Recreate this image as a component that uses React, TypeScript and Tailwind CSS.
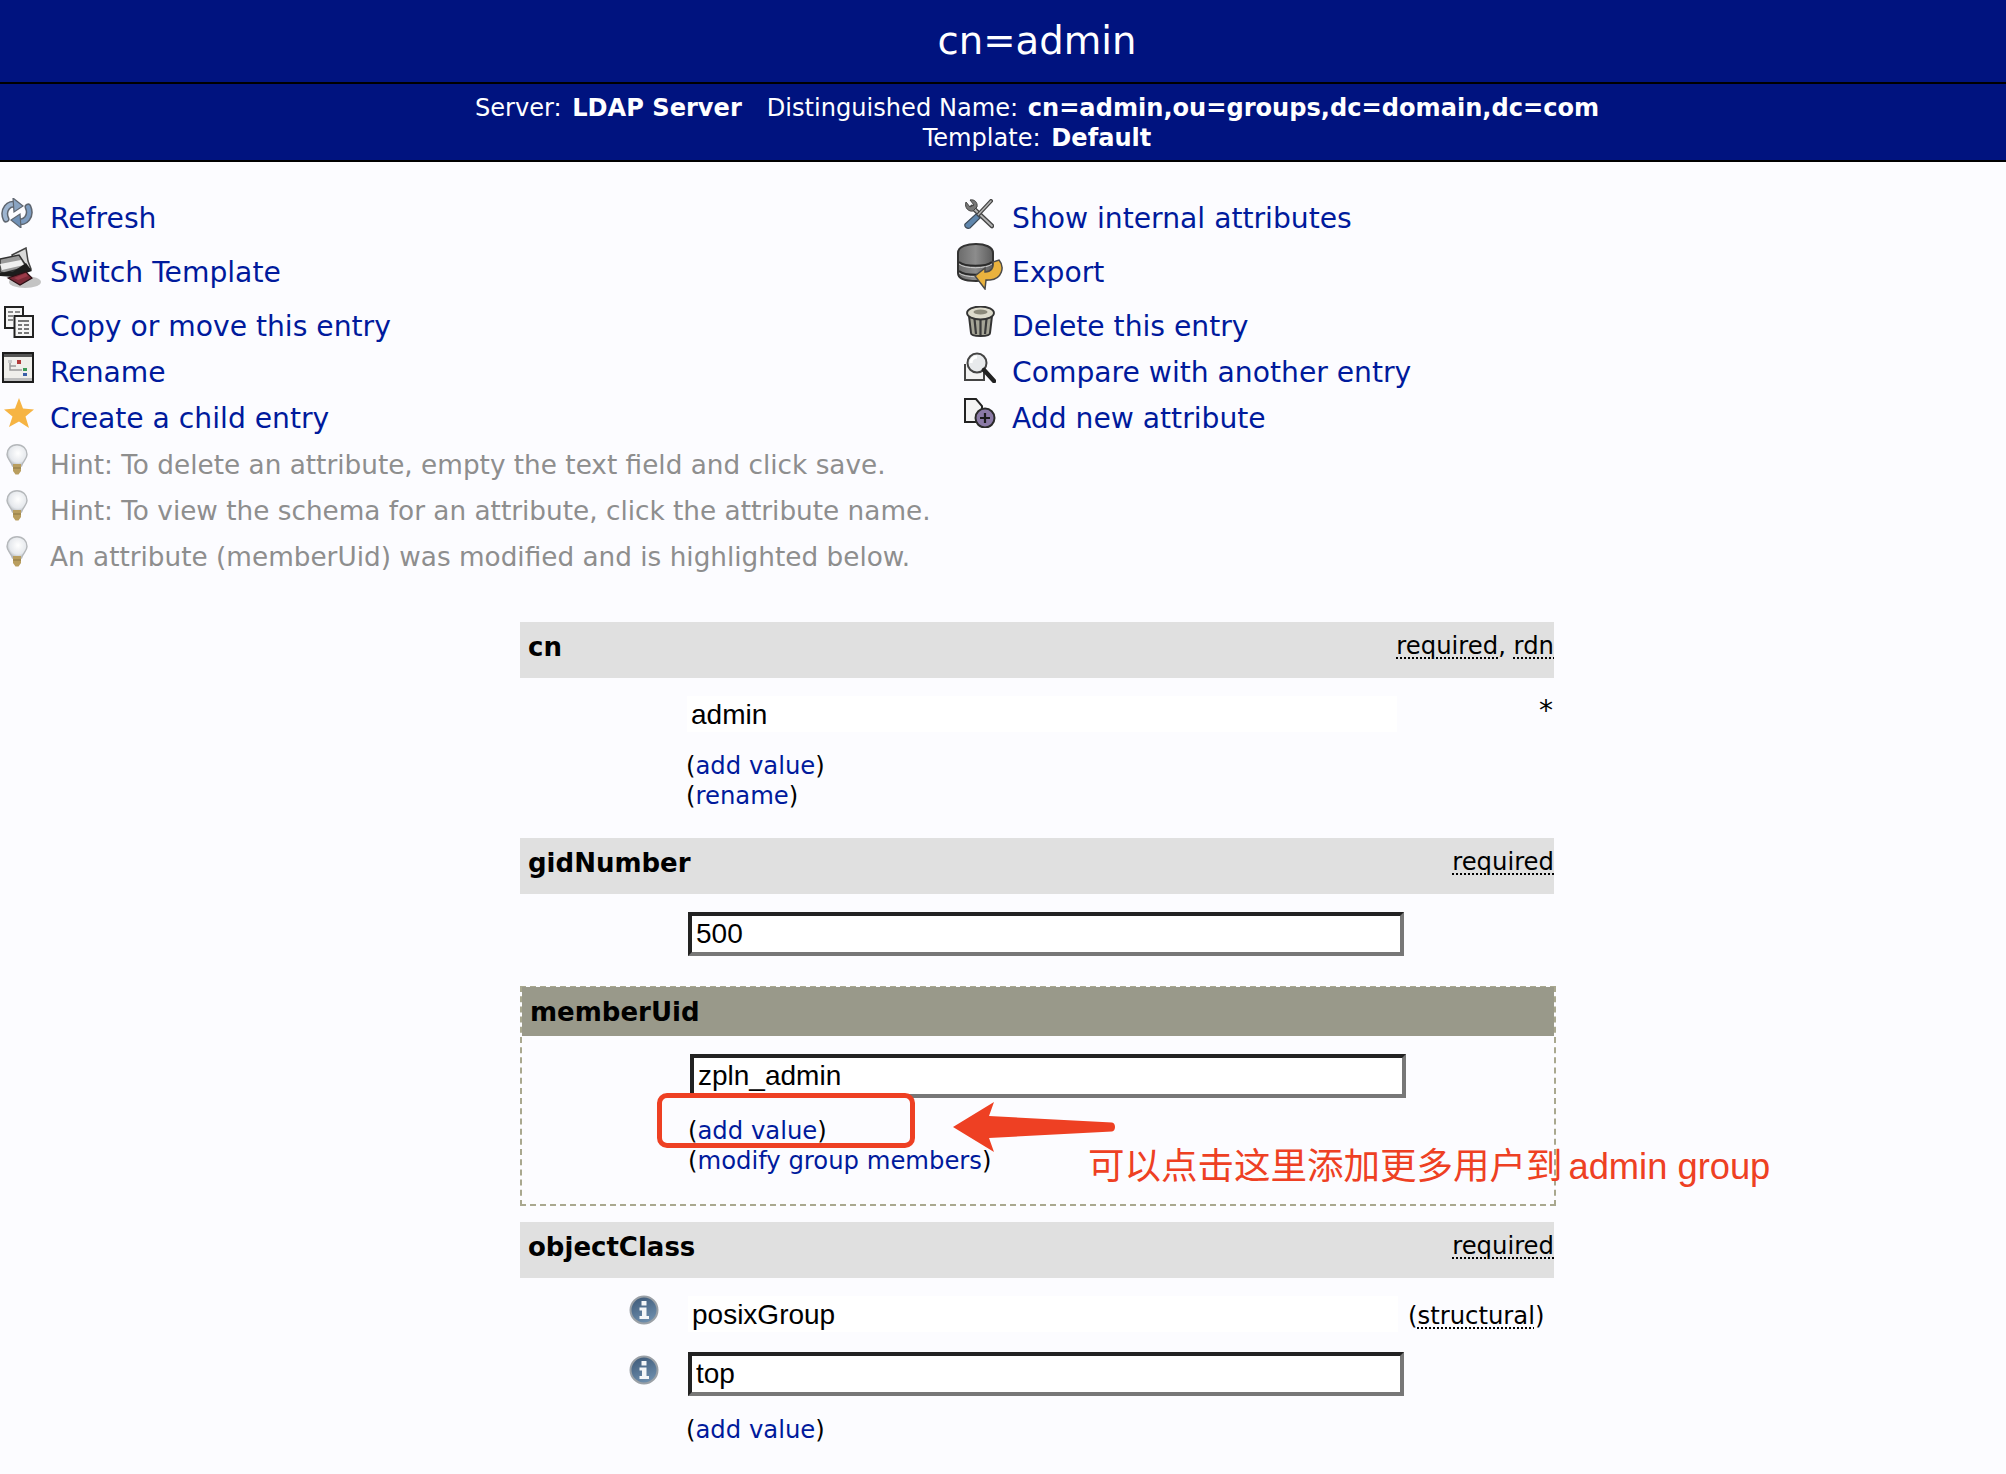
import React from "react";

const Refresh = () => (
  <svg width="32" height="30" viewBox="0 0 32 30" className="blur-[0.4px]">
    <g fill="none" strokeLinecap="round">
      <path d="M5 21C1 12 8 4 15 7" stroke="#5f6670" strokeWidth="7" />
      <path d="M27 9C31 18 24 26 17 23" stroke="#5f6670" strokeWidth="7" />
      <path d="M5 21C1 12 8 4 15 7" stroke="#9db4cf" strokeWidth="4" />
      <path d="M27 9C31 18 24 26 17 23" stroke="#7d9cc0" strokeWidth="4" />
    </g>
    <path d="M12 0L22 8L13 14Z" fill="#8aa4c2" stroke="#5f6670" strokeWidth="1.2" />
    <path d="M20 30L10 22L19 16Z" fill="#6f90b6" stroke="#5f6670" strokeWidth="1.2" />
  </svg>
);

const SwitchT = () => (
  <svg width="42" height="42" viewBox="0 0 42 42" className="blur-[0.6px]">
    <ellipse cx="25" cy="35" rx="16" ry="6" fill="#c4c4c4" />
    <path d="M12 8L26 1L28 14L31 22L16 22Z" fill="#d9d9d9" stroke="#444" strokeWidth="1.5" />
    <path d="M0 12L19 8L27 20L4 26L0 25Z" fill="#9a9a9a" stroke="#333" strokeWidth="1.5" />
    <path d="M0 17L21 13L24 18L2 23Z" fill="#efefef" />
    <path d="M0 26L14 24L26 16L32 24L14 30L0 29Z" fill="#1c1c1c" />
    <path d="M8 31L26 25L32 31L20 38Z" fill="#7a2a37" stroke="#2c1015" strokeWidth="1.2" />
    <path d="M14 31L26 26L28 29L18 33Z" fill="#9c3a49" />
  </svg>
);

const Copy = () => (
  <svg width="30" height="32" viewBox="0 0 30 32" className="blur-[0.3px]">
    <rect x="1" y="1" width="18" height="21" fill="#f5f5f5" stroke="#222" strokeWidth="2" />
    <path d="M4 6h5M11 6h5M4 10h5M11 10h5M4 14h5" stroke="#8a8a8a" strokeWidth="2" />
    <rect x="10.5" y="10" width="18.5" height="21" fill="#f5f5f5" stroke="#222" strokeWidth="2" />
    <path d="M14 15h11M14 19h4M20 19h5M14 23h4M20 23h5M14 27h4M20 27h5" stroke="#777" strokeWidth="2" />
  </svg>
);

const RenameI = () => (
  <svg width="32" height="31" viewBox="0 0 32 31" className="blur-[0.3px]">
    <rect x="1" y="1" width="30" height="29" fill="#f0efeb" stroke="#1c1c1c" strokeWidth="2" />
    <rect x="2" y="2" width="28" height="3" fill="#555" />
    <rect x="2" y="26" width="28" height="3" fill="#bdbdbd" />
    <path d="M8 10V18H20M8 14H14" stroke="#9a9a9a" strokeWidth="1.5" fill="none" />
    <rect x="6" y="8" width="4" height="3" fill="#c9c9c9" />
    <rect x="15" y="8" width="4" height="4" fill="#b23a3a" />
    <rect x="21" y="16" width="4" height="3" fill="#3d9a56" />
    <rect x="21" y="21" width="4" height="3" fill="#3a5fa8" />
  </svg>
);

const Star = () => (
  <svg width="30" height="30" viewBox="0 0 30 30" className="blur-[0.4px]">
    <path d="M15 0L19 10.5L30 11.5L21.5 18.5L25 30L15 23.5L5 29L8.5 18.5L0 11.5L11 10.5Z" fill="#f6b443" />
  </svg>
);

const Bulb = () => (
  <svg width="22" height="31" viewBox="0 0 22 31" className="blur-[0.3px]">
    <defs>
      <radialGradient id="bulbg" cx="0.55" cy="0.4" r="0.6">
        <stop offset="0" stopColor="#ffffff" />
        <stop offset="0.7" stopColor="#e6e9ed" />
        <stop offset="1" stopColor="#b4b9be" />
      </radialGradient>
    </defs>
    <path d="M11 0.8C5 0.8 1 5 1 10.5C1 15 5 17 6.5 22H15.5C17 17 21 15 21 10.5C21 5 17 .8 11 .8Z" fill="url(#bulbg)" stroke="#b5b8bb" strokeWidth="1.4" />
    <path d="M7 20H15V27L12.5 30.5H9.5L7 27Z" fill="#b99e5f" />
    <path d="M7 24H15" stroke="#8b7745" strokeWidth="1" />
  </svg>
);

const Tools = () => (
  <svg width="30" height="30" viewBox="0 0 30 30" className="blur-[0.4px]">
    <path d="M8 8L28 27" stroke="#444" strokeWidth="4.5" strokeLinecap="round" />
    <path d="M8 8L28 27" stroke="#b4b4b4" strokeWidth="1.8" strokeLinecap="round" />
    <path d="M2 3L6 8L10 6L6 1C10 0 14 3 13 8L9 12C5 13 0 9 2 3Z" fill="#777" stroke="#444" strokeWidth="1" />
    <path d="M27 2L13 17" stroke="#444" strokeWidth="4" strokeLinecap="round" />
    <path d="M27 2L13 17" stroke="#b4b4b4" strokeWidth="1.5" strokeLinecap="round" />
    <path d="M12 15L16 19L6 29C3 30 0 28 1 25Z" fill="#5f86ad" stroke="#3d4957" strokeWidth="1.2" />
  </svg>
);

const Db = () => (
  <svg width="47" height="47" viewBox="0 0 47 47" className="blur-[0.5px]">
    <defs>
      <linearGradient id="dbg" x1="0" x2="1" y1="0" y2="0">
        <stop offset="0" stopColor="#6b6b6b" />
        <stop offset="0.5" stopColor="#8c8c8c" />
        <stop offset="1" stopColor="#5c5c5c" />
      </linearGradient>
    </defs>
    <path d="M1 10C1 3 11 1 19 1C28 1 36 4 36 10V30C36 36 28 38 19 38C10 38 1 36 1 30Z" fill="url(#dbg)" stroke="#333" strokeWidth="2" />
    <path d="M2 19C8 24 29 24 35 19M2 28C8 33 29 33 35 28" fill="none" stroke="#2a2a2a" strokeWidth="2" />
    <path d="M2 21C8 26 29 26 35 21M2 30C8 35 29 35 35 30" fill="none" stroke="#ccc" strokeWidth="1" />
    <path d="M18 33L28 25V29C34 29 37 25 36 19L42 17C48 24 45 36 33 37H29L28 46Z" fill="#e9b23e" stroke="#4a4a4a" strokeWidth="1.5" />
  </svg>
);

const Trash = () => (
  <svg width="29" height="31" viewBox="0 0 29 31" className="blur-[0.4px]">
    <path d="M3 10L5 27C5 31 24 31 24 27L26 10Z" fill="#a5a496" stroke="#333" strokeWidth="2" />
    <path d="M8.5 13L10 28M14.5 13V29M20.5 13L19 28" stroke="#3a3a3a" strokeWidth="2.2" />
    <ellipse cx="14.5" cy="7" rx="13.5" ry="6.5" fill="#dcdacb" stroke="#333" strokeWidth="1.8" />
    <ellipse cx="14.5" cy="6" rx="7" ry="2.5" fill="#8b897a" />
  </svg>
);

const Compare = () => (
  <svg width="32" height="31" viewBox="0 0 32 31" className="blur-[0.4px]">
    <path d="M1 12V28H20V14L12 3H8" fill="#f2f2f2" stroke="#444" strokeWidth="2" />
    <circle cx="13" cy="11" r="9.5" fill="#e8eaec" stroke="#444" strokeWidth="2" />
    <path d="M7 11C7 7 10 5 13 5" stroke="#fff" strokeWidth="3" fill="none" />
    <path d="M20 18L30 29" stroke="#222" strokeWidth="4.5" strokeLinecap="round" />
  </svg>
);

const AddAttr = () => (
  <svg width="32" height="30" viewBox="0 0 32 30" className="blur-[0.3px]">
    <path d="M1 1H12L18 8V24H1Z" fill="#f3f3f3" stroke="#222" strokeWidth="2" />
    <circle cx="21" cy="20" r="9.5" fill="#8b7aa6" stroke="#2a2a2a" strokeWidth="2" />
    <path d="M21 15V25M16 20H26" stroke="#1c1c1c" strokeWidth="2.2" />
  </svg>
);

const Info = () => (
  <svg width="30" height="30" viewBox="0 0 30 30" className="blur-[0.3px]">
    <defs>
      <linearGradient id="infog" x1="0" x2="0.4" y1="0" y2="1">
        <stop offset="0" stopColor="#3a5675" />
        <stop offset="1" stopColor="#6c8cab" />
      </linearGradient>
    </defs>
    <circle cx="15" cy="15" r="13.5" fill="url(#infog)" stroke="#9aa0a6" strokeWidth="2" />
    <rect x="12.5" y="6" width="5" height="4.5" fill="#f4f6f8" />
    <path d="M10.5 12.5H17.5V21H20V24H10.5V21H13V15.5H10.5Z" fill="#f4f6f8" />
  </svg>
);

const Row = ({ h, icon, text, gray }: { h: string; icon: React.ReactNode; text: string; gray?: boolean }) => (
  <div className={`flex items-start ${h}`}>
    <div className="w-[50px] shrink-0">{icon}</div>
    <a className={`mt-[2px] leading-[46px] whitespace-nowrap ${gray ? "text-[#8e8e8e] text-[26.3px]" : "text-[#001a9c] text-[28.2px]"}`}>{text}</a>
  </div>
);

const Link = ({ text }: { text: string }) => (
  <div className="h-[30px] leading-[30px] text-[24.3px] text-black whitespace-nowrap">
    (<a className="text-[#001a9c]">{text}</a>)
  </div>
);

const Req = ({ text }: { text: string }) => (
  <span className="underline decoration-dotted decoration-2 underline-offset-[3px]">{text}</span>
);

const Header = ({ name, right }: { name: string; right?: React.ReactNode }) => (
  <div className="h-[56px] flex items-center justify-between pl-2 bg-[#e0e0e0] text-black">
    <span className="text-[26px] font-bold leading-none mb-[6px]">{name}</span>
    <span className="text-[24.3px] leading-none mb-[7px]">{right}</span>
  </div>
);

const Field = ({ value }: { value: string }) => (
  <input
    readOnly
    value={value}
    className="block w-[716px] h-[44px] bg-white pl-1 text-black text-[28px] border-4 border-t-[#222222] border-l-[#222222] border-b-[#777777] border-r-[#777777] outline-none [font-family:'Liberation_Sans',sans-serif]"
  />
);

const Static = ({ value }: { value: string }) => (
  <div className="w-[710px] h-[36px] bg-white pl-1 leading-[37px] text-black text-[28px] [font-family:'Liberation_Sans',sans-serif]">
    {value}
  </div>
);

export default function App() {
  return (
    <div className="w-[2006px] h-[1474px] overflow-hidden bg-[#fcfcff] [font-family:'DejaVu_Sans',Verdana,sans-serif]">
      <div className="w-[2074px]">
        <div className="h-[84px] bg-[#00137f] border-b-2 border-black flex items-center justify-center text-white text-[38.6px] pb-[1px]">
          cn=admin
        </div>
        <div className="h-[78px] bg-[#00137f] border-b-2 border-black pt-[9px] text-center text-white text-[24.1px] leading-[30px]">
          <div>
            Server: <b className="ml-[3px]">LDAP Server</b>
            <span className="inline-block w-[25px]" />
            Distinguished Name: <b className="ml-[2px]">cn=admin,ou=groups,dc=domain,dc=com</b>
          </div>
          <div>
            Template: <b className="ml-[3px]">Default</b>
          </div>
        </div>

        <div className="flex pt-[32px]">
          <div className="w-[962px] shrink-0">
            <Row h="h-[54px]" icon={<div className="mt-[4px] ml-[1px]"><Refresh /></div>} text="Refresh" />
            <Row h="h-[54px]" icon={<div className="-mt-[1px]"><SwitchT /></div>} text="Switch Template" />
            <Row h="h-[46px]" icon={<div className="mt-[4px] ml-[4px]"><Copy /></div>} text="Copy or move this entry" />
            <Row h="h-[46px]" icon={<div className="mt-[4px] ml-[2px]"><RenameI /></div>} text="Rename" />
            <Row h="h-[46px]" icon={<div className="mt-[4px] ml-[4px]"><Star /></div>} text="Create a child entry" />
            <Row h="h-[46px]" gray icon={<div className="mt-[4px] ml-[6px]"><Bulb /></div>} text="Hint: To delete an attribute, empty the text field and click save." />
            <Row h="h-[46px]" gray icon={<div className="mt-[4px] ml-[6px]"><Bulb /></div>} text="Hint: To view the schema for an attribute, click the attribute name." />
            <Row h="h-[46px]" gray icon={<div className="mt-[4px] ml-[6px]"><Bulb /></div>} text="An attribute (memberUid) was modified and is highlighted below." />
          </div>
          <div className="flex-1">
            <Row h="h-[54px]" icon={<div className="mt-[5px] ml-[2px]"><Tools /></div>} text="Show internal attributes" />
            <Row h="h-[54px]" icon={<div className="-mt-[5px] -ml-[5px]"><Db /></div>} text="Export" />
            <Row h="h-[46px]" icon={<div className="mt-[4px] ml-[4px]"><Trash /></div>} text="Delete this entry" />
            <Row h="h-[46px]" icon={<div className="mt-[4px] ml-[2px]"><Compare /></div>} text="Compare with another entry" />
            <Row h="h-[46px]" icon={<div className="mt-[4px] ml-[2px]"><AddAttr /></div>} text="Add new attribute" />
          </div>
        </div>

        <div className="w-[1034px] mx-auto mt-[44px]">
          <Header name="cn" right={<><Req text="required" />, <Req text="rdn" /></>} />
          <div className="h-[160px] pt-[18px] pl-[166px]">
            <div className="flex">
              <div className="ml-[1px]"><Static value="admin" /></div>
              <div className="flex-1 text-right text-[28px] leading-[28px] text-black pr-[1px] mt-[1px]">*</div>
            </div>
            <div className="mt-[19px]">
              <Link text="add value" />
              <Link text="rename" />
            </div>
          </div>

          <Header name="gidNumber" right={<Req text="required" />} />
          <div className="h-[92px] pt-[18px] pl-[168px]">
            <Field value="500" />
          </div>

          <div className="relative w-[1036px] h-[220px] border-2 border-dashed border-[#a9a88f]">
            <div className="h-[49px] mt-[-1px] flex items-center pl-[8px] pt-[2px] bg-[#99998a] text-black text-[26px] font-bold">
              memberUid
            </div>
            <div className="pt-[18px] pl-[168px]">
              <Field value="zpln_admin" />
              <div className="mt-[18px] -ml-[2px]">
                <Link text="add value" />
                <Link text="modify group members" />
              </div>
            </div>

            <div className="absolute left-[135px] top-[105px] w-[258px] h-[55px] border-[5px] border-[#ee4023] rounded-[10px]" />
            <svg className="absolute left-[430px] top-[113px]" width="164" height="52" viewBox="0 0 164 52">
              <path d="M1 26L42 1L37 15L160 21.5C164 22 164 30 160 30.5L37 37L42 51Z" fill="#ee4023" />
            </svg>
            <div className="absolute left-[566px] top-[157px] whitespace-nowrap text-[36.3px] leading-[44px] text-[#ee4023] [font-family:'Liberation_Sans','Noto_Sans_CJK_SC',sans-serif]">
              <span className="text-[36.5px]">可以点击这里添加更多用户到</span>
              <span className="ml-[6px]">admin group</span>
            </div>
          </div>

          <div className="mt-[16px]">
            <Header name="objectClass" right={<Req text="required" />} />
          </div>
          <div className="pt-[17px] pl-[109px]">
            <div className="flex">
              <div className="w-[59px] shrink-0"><Info /></div>
              <div className="pt-[1px]"><Static value="posixGroup" /></div>
              <div className="ml-[10px] pt-[6px] text-[24.3px] leading-[30px] text-black whitespace-nowrap">
                (<Req text="structural" />)
              </div>
            </div>
            <div className="flex mt-[20px]">
              <div className="w-[59px] shrink-0 pt-[3px]"><Info /></div>
              <Field value="top" />
            </div>
            <div className="mt-[19px] pl-[57px]">
              <Link text="add value" />
            </div>
          </div>
        </div>
      </div>
    </div>
  );
}
